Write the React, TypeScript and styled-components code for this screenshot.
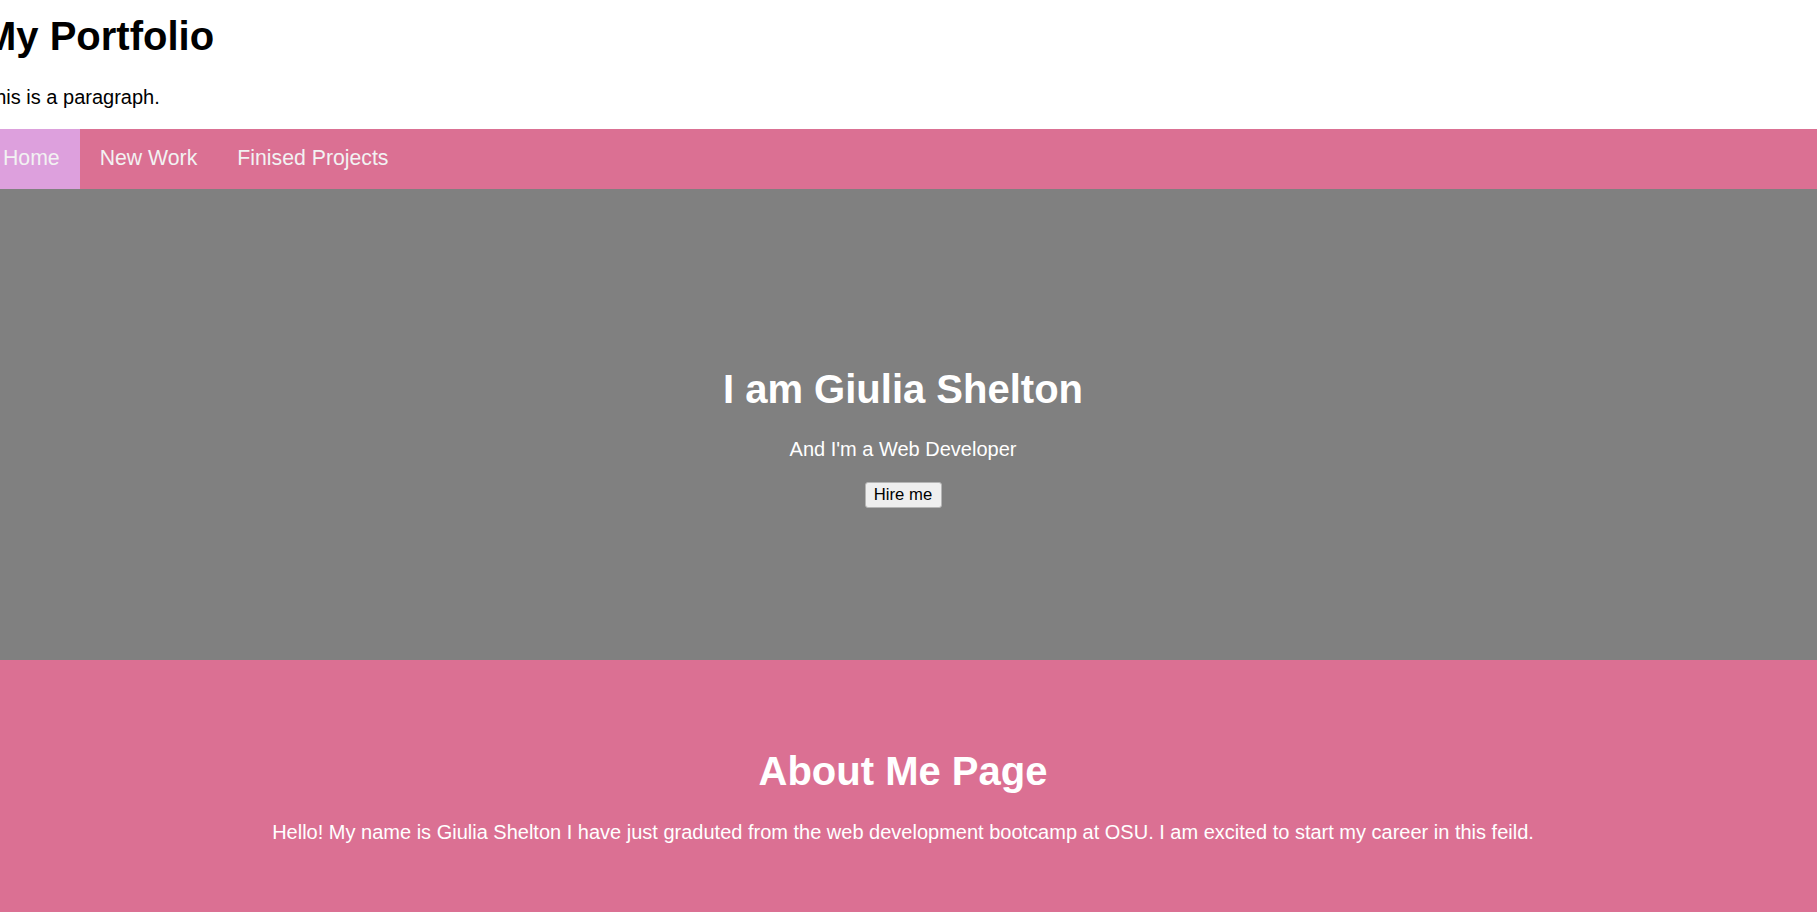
import React from "react";
import styled, { createGlobalStyle } from "styled-components";

const GlobalStyle = createGlobalStyle`
  html, body {
    margin: 0;
    padding: 0;
    overflow-x: hidden;
    background: #ffffff;
    font-family: "Liberation Sans", Arial, Helvetica, sans-serif;
  }
`;

const Page = styled.div`
  margin-left: -17px;
  width: calc(100% + 23px);
`;

const Header = styled.header`
  display: flow-root;
`;

const Title = styled.h1`
  margin: 14px 0 26.8px;
  font-size: 40px;
  font-weight: 700;
  line-height: normal;
  color: #000000;
`;

const Intro = styled.p`
  margin: 0 0 20px;
  font-size: 20px;
  line-height: normal;
  color: #000000;
`;

const Nav = styled.nav`
  display: flex;
  background: #db7093;
`;

const NavLink = styled.a<{ $active?: boolean }>`
  display: block;
  padding: 17.5px 20px;
  font-size: 21.25px;
  line-height: normal;
  color: #f2f2f2;
  text-decoration: none;
  background: ${(p) => (p.$active ? "#dda0dd" : "transparent")};
`;

const Hero = styled.section`
  height: 471px;
  box-sizing: border-box;
  padding-bottom: 1px;
  display: flex;
  flex-direction: column;
  align-items: center;
  justify-content: center;
  background: #808080;
  color: #ffffff;
  text-align: center;
`;

const HeroTitle = styled.h1`
  margin: 26.8px 0;
  font-size: 40px;
  font-weight: 700;
  line-height: normal;
`;

const HeroText = styled.p`
  margin: 0 0 21px;
  font-size: 20px;
  line-height: normal;
`;

const HireButton = styled.button`
  font-family: "Liberation Sans", Arial, sans-serif;
  font-size: 16.67px;
  line-height: normal;
  padding: 1.25px 7.5px;
  color: #000000;
  background: #efefef;
  border: 1px solid #b5b5b5;
  border-radius: 3px;
  width: 77px;
  height: 25.5px;
  box-sizing: border-box;
  cursor: pointer;
`;

const About = styled.section`
  padding: 62.5px 0 120px;
  background: #db7093;
  color: #ffffff;
  text-align: center;
`;

const AboutTitle = styled.h1`
  margin: 26.8px 0;
  font-size: 40px;
  font-weight: 700;
  line-height: normal;
`;

const AboutText = styled.p`
  margin: 0;
  font-size: 20px;
  line-height: normal;
`;

const links = [
  { label: "Home", active: true },
  { label: "New Work", active: false },
  { label: "Finised Projects", active: false },
];

export default function App() {
  return (
    <>
      <GlobalStyle />
      <Page>
        <Header>
          <Title>My Portfolio</Title>
          <Intro>This is a paragraph.</Intro>
        </Header>
        <Nav>
          {links.map((l) => (
            <NavLink key={l.label} href="#" $active={l.active}>
              {l.label}
            </NavLink>
          ))}
        </Nav>
        <Hero>
          <HeroTitle>I am Giulia Shelton</HeroTitle>
          <HeroText>And I'm a Web Developer</HeroText>
          <HireButton>Hire me</HireButton>
        </Hero>
        <About>
          <AboutTitle>About Me Page</AboutTitle>
          <AboutText>
            Hello! My name is Giulia Shelton I have just graduted from the web
            development bootcamp at OSU. I am excited to start my career in this
            feild.
          </AboutText>
        </About>
      </Page>
    </>
  );
}
